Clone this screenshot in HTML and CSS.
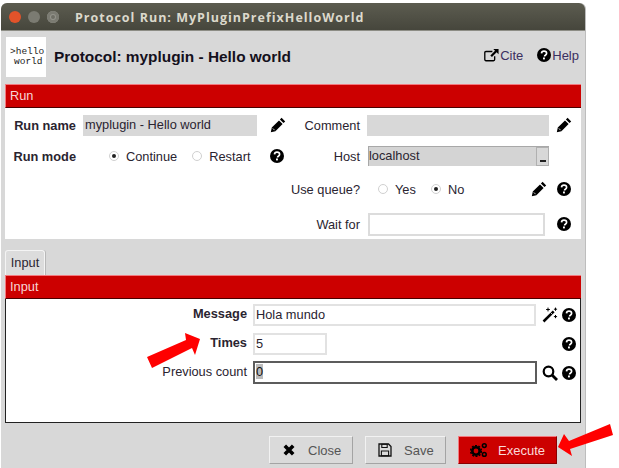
FILE: index.html
```html
<!DOCTYPE html>
<html lang="en">
<head>
<meta charset="utf-8">
<title>Protocol Run</title>
<link rel="stylesheet" href="styles.css">
</head>
<body>
<svg class="defs" width="0" height="0" aria-hidden="true">
  <symbol id="i-help" viewBox="0 0 14 14">
    <circle cx="7" cy="7" r="7" fill="#000"/>
    <path d="M4.5 5.4C4.6 3.9 5.7 3.2 7 3.2c1.5 0 2.6.8 2.6 2.1 0 1-.6 1.5-1.3 2-.5.3-.7.6-.7 1.1" fill="none" stroke="#fff" stroke-width="1.7"/>
    <rect x="6" y="9.5" width="1.9" height="1.9" fill="#fff"/>
  </symbol>
  <symbol id="i-pencil" viewBox="0 0 16 16">
    <path d="M11.6.8l3.6 3.6-1.7 1.7-3.6-3.6zM9 3.4L12.600 7 5.400 14.200 .8 15.200 1.800 10.600z" fill="#000"/>
    <path d="M2.800 11.400l1.800 1.800" stroke="#fff" stroke-width=".8"/>
  </symbol>
  <symbol id="i-wand" viewBox="0 0 16 16">
    <path d="M.6 13.600L10.800 3.400l1.800 1.800L2.400 15.400z" fill="#000"/>
    <path d="M8.600 5.600l1.800 1.800" stroke="#fff" stroke-width=".8"/>
    <path d="M6 .6v3.800M4.100 2.500h3.800M13.500.6v3.200M11.900 2.200h3.200M13.500 8v3.200M11.900 9.600h3.200" stroke="#000" stroke-width="1"/>
  </symbol>
  <symbol id="i-search" viewBox="0 0 16 16">
    <circle cx="6.500" cy="6.500" r="4.800" fill="none" stroke="#000" stroke-width="2.200"/>
    <path d="M10 10l5 5" stroke="#000" stroke-width="2.800"/>
  </symbol>
  <symbol id="i-cite" viewBox="0 0 17 15">
    <path d="M9.500 3.500H2.200a1.300 1.300 0 0 0-1.300 1.300v7.900a1.300 1.300 0 0 0 1.300 1.300h8.600a1.300 1.300 0 0 0 1.300-1.300V9" fill="none" stroke="#000" stroke-width="1.500"/>
    <path d="M10.500.7h6v6l-2.200-2.200-5.300 5.300-1.800-1.800 5.300-5.300z" fill="#000"/>
  </symbol>
  <symbol id="i-close" viewBox="0 0 14 14">
    <path d="M2.800 2.800l8.400 8.400M11.200 2.800l-8.400 8.400" stroke="#000" stroke-width="3.600"/>
  </symbol>
  <symbol id="i-save" viewBox="0 0 14 14">
    <path d="M1 1h9.500L13 3.500V13H1z" fill="none" stroke="#111" stroke-width="1.300"/>
    <path d="M3.800 1.300h5.400v3.200H3.800zM3.400 8h7.200v4.700H3.400z" fill="none" stroke="#111" stroke-width="1.100"/>
  </symbol>
  <symbol id="i-gears" viewBox="0 0 18 16">
    <circle cx="6" cy="9" r="3.700" fill="none" stroke="#000" stroke-width="2.600"/>
    <circle cx="6" cy="9" r="5.400" fill="none" stroke="#000" stroke-width="1.400" stroke-dasharray="2 1.400"/>
    <circle cx="14.300" cy="3.600" r="1.900" fill="none" stroke="#000" stroke-width="1.500"/>
    <circle cx="14.300" cy="12.400" r="1.900" fill="none" stroke="#000" stroke-width="1.500"/>
  </symbol>
</svg>

<div class="window">
  <header class="titlebar">
    <span class="dot dot-close"></span>
    <span class="dot dot-min"></span>
    <span class="dot dot-max"></span>
    <span class="title-text">Protocol Run: MyPluginPrefixHelloWorld</span>
  </header>

  <div class="content">
    <div class="top">
      <div class="logo"><span>&gt;hello</span><span class="logo-2">world</span></div>
      <h1 class="proto-title">Protocol: myplugin - Hello world</h1>
      <a class="top-link top-cite"><svg class="ic ic-cite"><use href="#i-cite"/></svg>Cite</a>
      <a class="top-link"><svg class="ic ic-help"><use href="#i-help"/></svg>Help</a>
    </div>

    <div class="bar">Run</div>
    <section class="run-form">
      <label class="lbl strong">Run name</label>
      <div class="fld fld-grey">myplugin - Hello world</div>
      <div class="icons"><svg class="ic ic-pencil"><use href="#i-pencil"/></svg></div>
      <label class="lbl">Comment</label>
      <div class="fld fld-grey"></div>
      <div class="icons icons-end"><svg class="ic ic-pencil"><use href="#i-pencil"/></svg></div>

      <label class="lbl strong">Run mode</label>
      <div class="radios radios-mode">
        <span class="radio on"></span><span class="radio-text">Continue</span>
        <span class="radio"></span><span class="radio-text">Restart</span>
      </div>
      <div class="icons"><svg class="ic ic-help"><use href="#i-help"/></svg></div>
      <label class="lbl">Host</label>
      <div class="select"><span class="select-text">localhost</span><span class="select-btn"><i></i></span></div>
      <div></div>

      <div class="span3"></div>
      <label class="lbl">Use queue?</label>
      <div class="wide">
        <div class="radios radios-queue">
          <span class="radio"></span><span class="radio-text">Yes</span>
          <span class="radio on"></span><span class="radio-text">No</span>
        </div>
        <svg class="ic ic-pencil"><use href="#i-pencil"/></svg>
        <svg class="ic ic-help"><use href="#i-help"/></svg>
      </div>

      <div class="span3"></div>
      <label class="lbl">Wait for</label>
      <div class="wide wide-wait">
        <div class="fld fld-white fld-wait"></div>
        <svg class="ic ic-help"><use href="#i-help"/></svg>
      </div>
    </section>

    <div class="tabs"><span class="tab">Input</span></div>
    <div class="bar">Input</div>
    <section class="input-form">
      <div class="param">
        <label class="lbl strong">Message</label>
        <div class="fld fld-white fld-msg">Hola mundo</div>
        <div class="param-icons"><svg class="ic ic-pencil"><use href="#i-wand"/></svg><svg class="ic ic-help"><use href="#i-help"/></svg></div>
      </div>
      <div class="param">
        <label class="lbl strong">Times</label>
        <div class="fld fld-white fld-times">5</div>
        <div class="param-icons"><svg class="ic ic-help"><use href="#i-help"/></svg></div>
      </div>
      <div class="param">
        <label class="lbl">Previous count</label>
        <div class="fld fld-white fld-focus"><span class="sel">0</span></div>
        <div class="param-icons"><svg class="ic ic-pencil"><use href="#i-search"/></svg><svg class="ic ic-help"><use href="#i-help"/></svg></div>
      </div>
    </section>

    <footer class="actions">
      <button class="btn btn-close"><svg class="ic ic-btn"><use href="#i-close"/></svg>Close</button>
      <button class="btn btn-save"><svg class="ic ic-btn"><use href="#i-save"/></svg>Save</button>
      <button class="btn btn-exec"><svg class="ic ic-gears"><use href="#i-gears"/></svg>Execute</button>
    </footer>
  </div>

  <svg class="arrow arrow-times" viewBox="0 0 56 38"><path d="M1 25L40 8 39 1 54 7 49 23 46 16 6 36z" fill="#f00"/></svg>
  <svg class="arrow arrow-exec" viewBox="0 0 58 36"><path d="M54 2L13 19 8 12 2 25 16 34 14 27 57 13z" fill="#f00"/></svg>
</div>
</body>
</html>
```

FILE: styles.css
```css
* { box-sizing: border-box; }
html, body { margin: 0; padding: 0; background: #fff; }
body {
  width: 619px;
  height: 468px;
  overflow: hidden;
  padding: 3px 0 0 1px;
  font: 12.8px "Liberation Sans", Arial, sans-serif;
  color: #2a2430;
}
.defs { position: absolute; }
.ic { display: block; flex: none; }

.window {
  position: relative;
  width: 585px;
  height: 470px;
  background: #d8d8d8;
  border-radius: 6px 6px 0 0;
  border-right: 1px solid #bdbdbd;
  filter: blur(.4px);
}
.titlebar {
  height: 28px;
  display: flex;
  align-items: center;
  padding-left: 8px;
  background: linear-gradient(#5c5c50, #46463c);
  border-radius: 6px 6px 0 0;
  border-bottom: 1px solid #8d8d85;
}
.dot { width: 12px; height: 12px; border-radius: 50%; margin-right: 7px; background: #7b7b72; }
.dot-close { background: #e2532a; }
.dot-max { background: #6f6f66; box-shadow: inset 0 0 0 3px #7b7b72, inset 0 0 0 4px #94948c; }
.title-text {
  margin: 2px 0 0 9px;
  font: bold 12.5px "Open Sans", sans-serif;
  letter-spacing: 1px;
  color: #dcd9cc;
}

.content { padding: 0 4px; }
.top { height: 53px; display: flex; align-items: center; padding-bottom: 1px; }
.logo {
  width: 40px;
  height: 40px;
  margin: 0 8px 0 1px;
  background: #fff;
  display: flex;
  flex-direction: column;
  justify-content: center;
  font: 9.5px/10px "Liberation Mono", monospace;
  color: #222;
  padding-left: 4px;
}
.logo-2 { padding-left: 4px; }
.proto-title { flex: 1; margin: 0; font: bold 15.4px "Liberation Sans", sans-serif; color: #14101c; }
.top-link { display: flex; align-items: center; gap: 1px; font-size: 13px; color: #3b2f60; margin-right: 2px; margin-top: -4px; }
.top-cite { margin-right: 14px; }

.bar {
  width: 576px;
  height: 24px;
  padding: 0 4px;
  line-height: 22px;
  background: #cc0000;
  color: #f6d6d6;
  border-top: 1px solid #f47a80;
  border-left: 1px solid #f47a80;
  border-bottom: 1px solid #4a0000;
}
.run-form {
  width: 576px;
  height: 131px;
  background: #fff;
  display: grid;
  grid-template-columns: 71px 181px 28px 75px 189px 32px;
  grid-template-rows: 20px 18px 24px 22px;
  row-gap: 12px;
  align-items: center;
  align-content: start;
  padding-top: 7px;
}
.lbl { text-align: right; white-space: nowrap; }
.strong { font-weight: bold; }
.fld { height: 21px; line-height: 20px; padding-left: 2px; overflow: hidden; }
.fld-grey { background: #d8d8d8; margin-left: 7px; }
.icons { display: flex; padding-left: 13px; }
.icons-end { padding-left: 7px; }
.ic-pencil { width: 16px; height: 16px; }
.ic-help { width: 14px; height: 14px; }
.ic-cite { width: 15px; height: 14px; }
.radios { display: flex; align-items: center; }
.radios-mode { padding-left: 33px; }
.radio {
  flex: none;
  width: 10px;
  height: 10px;
  border-radius: 50%;
  background: #fff;
  border: 1px solid #d0d0d0;
  position: relative;
}
.radio.on::after {
  content: "";
  position: absolute;
  left: 2px;
  top: 2px;
  width: 4px;
  height: 4px;
  border-radius: 50%;
  background: #222;
}
.radio-text { margin: 0 15px 0 7px; }
.select {
  height: 20px;
  margin-left: 8px;
  display: flex;
  background: #d4d4d4;
  border: 1px solid #a8a8a8;
  border-right: 0;
  border-bottom: 0;
}
.select-text { flex: 1; line-height: 18px; }
.select-btn { width: 13px; background: #d8d8d8; border: 1px solid #b0b0b0; position: relative; }
.select-btn i { position: absolute; left: 3px; bottom: 3px; width: 6px; height: 2px; background: #222; }
.span3 { grid-column: span 3; }
.wide { grid-column: span 2; display: flex; align-items: center; margin-left: 8px; }
.radios-queue { padding-left: 10px; flex: 1; }
.wide > .ic-help { margin: 0 10px 0 10px; }
.fld-white { background: #fff; border: 2px solid #e2e2e2; padding-left: 1px; line-height: 17px; }
.fld-wait { width: 177px; height: 23px; flex: none; border-color: #dcdcdc; }
.wide-wait > .ic-help { margin-left: 12px; }

.tabs { height: 36px; display: flex; align-items: flex-end; }
.tab {
  width: 40px;
  height: 25px;
  line-height: 23px;
  text-align: center;
  background: #dcdcdc;
  border: 1px solid #f4f4f4;
  border-bottom: 0;
  border-radius: 3px 3px 0 0;
  box-shadow: 1px 0 0 #b8b8b8;
}
.input-form {
  width: 576px;
  height: 124px;
  background: #fff;
  border: 1px solid #222;
  border-top: 0;
  padding-top: 1px;
}
.param { display: flex; align-items: center; height: 29px; }
.param .lbl { width: 241px; margin-bottom: 3px; }
.param .fld { margin-left: 6px; }
.fld-msg { width: 283px; height: 22px; }
.fld-times { width: 74px; height: 22px; }
.fld-focus { width: 284px; height: 23px; border-color: #5c5c5c; }
.sel { background: #bbb; color: #111; }
.param-icons { display: flex; gap: 4px; align-items: center; margin-left: auto; padding-right: 4px; }

.actions { display: flex; justify-content: flex-end; gap: 12px; padding: 13px 24px 0 0; }
.btn {
  height: 28px;
  display: flex;
  align-items: center;
  font: 13px "Liberation Sans", sans-serif;
  color: #555;
  background: #dadada;
  border: 1px solid;
  border-color: #f2f2f2 #a4a4a4 #a4a4a4 #f2f2f2;
  padding: 0 0 0 12px;
}
.btn-close { width: 84px; }
.btn-save { width: 81px; }
.btn-exec { width: 99px; padding-left: 11px; background: #cc0000; color: #fadada; border-color: #f47a80 #8a0000 #8a0000 #f47a80; }
.ic-btn { width: 14px; height: 14px; margin-right: 12px; }
.ic-gears { width: 18px; height: 16px; margin-right: 10px; }

.arrow { position: absolute; }
.arrow-times { left: 145px; top: 329px; width: 56px; height: 38px; }
.arrow-exec { left: 555px; top: 419px; width: 58px; height: 36px; }
```
